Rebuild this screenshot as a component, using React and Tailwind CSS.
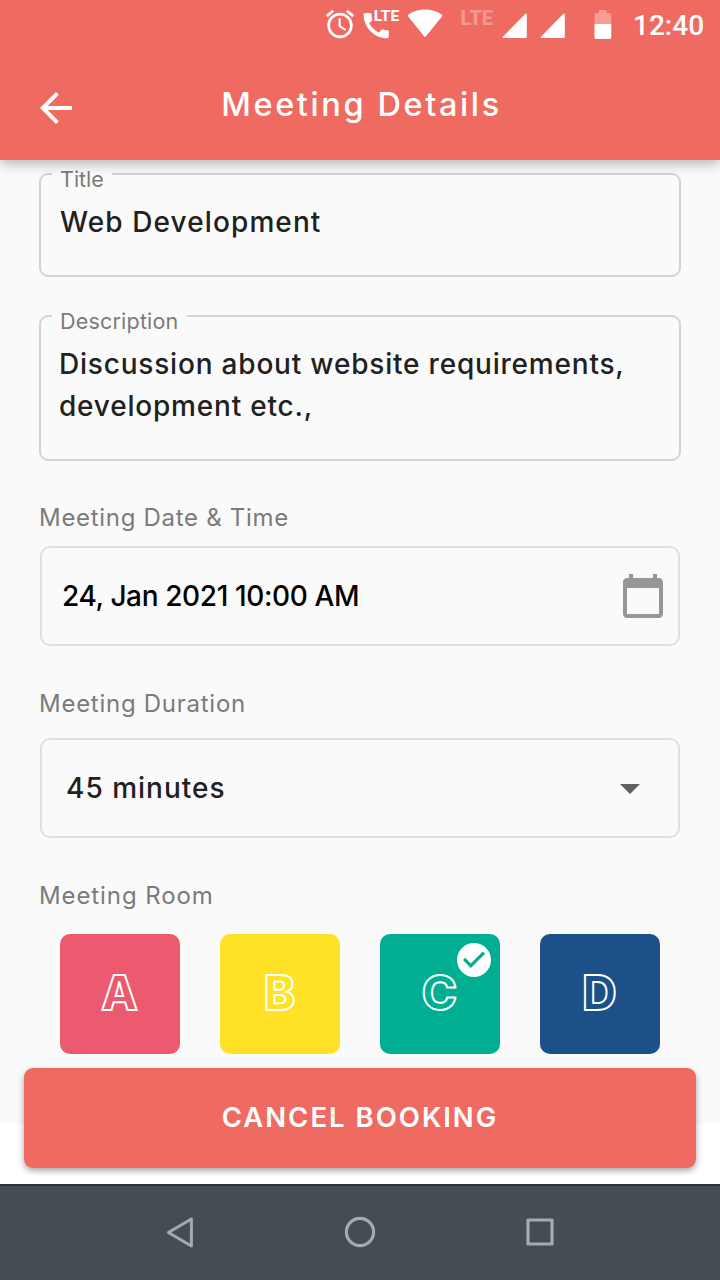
const ROOMS = [
  { name: "A", color: "bg-[#eb5a6e]" },
  { name: "B", color: "bg-[#ffe226]" },
  { name: "C", color: "bg-[#00af92]", selected: true },
  { name: "D", color: "bg-[#1b5088]" },
];

function SignalIcon() {
  return (
    <svg className="h-[25px] w-[25px]" viewBox="0 0 25 25" fill="#fff">
      <path d="M23.4.8Q24.8 0 24.8 1.6V23.8Q24.8 25 23.6 25H1.6Q0 25 .9 23.8Z" />
    </svg>
  );
}

function StatusBar() {
  return (
    <div className="flex h-12 items-start pl-[323px] text-white">
      <svg className="mt-[7px] h-[34px] w-[34px]" viewBox="0 0 24 24" fill="currentColor">
        <path d="M22 5.72l-4.6-3.86-1.29 1.53 4.6 3.86L22 5.72zM7.88 3.39L6.6 1.86 2 5.71l1.29 1.53 4.59-3.85zM12.5 8H11v6l4.75 2.85.75-1.23-4-2.37V8zM12 4c-4.97 0-9 4.03-9 9s4.02 9 9 9c4.97 0 9-4.03 9-9s-4.03-9-9-9zm0 16c-3.87 0-7-3.13-7-7s3.13-7 7-7 7 3.13 7 7-3.13 7-7 7z" />
      </svg>
      <svg className="mt-[4px] ml-[6px] h-[36px] w-[38px]" viewBox="0 0 38 36" fill="currentColor">
        <path
          transform="translate(-3.6 4.8) scale(1.4)"
          d="M20.01 15.38c-1.23 0-2.42-.2-3.53-.56-.35-.12-.74-.03-1.01.24l-1.57 1.97c-2.83-1.35-5.48-3.9-6.89-6.83l1.95-1.66c.27-.28.35-.67.24-1.02-.37-1.11-.56-2.3-.56-3.53 0-.54-.45-.99-.99-.99H4.19C3.65 3 3 3.24 3 3.99 3 13.28 10.73 21 20.01 21c.71 0 .99-.63.99-1.18v-3.45c0-.54-.45-.99-.99-.99z"
        />
        <text x="10.7" y="17" fontFamily="Roboto, sans-serif" fontWeight="800" fontSize="15" textLength="25.6" lengthAdjust="spacingAndGlyphs">LTE</text>
      </svg>
      <svg className="mt-[9px] ml-[6px] h-[29px] w-[37px]" viewBox="0 0 37 29" fill="currentColor">
        <path d="M1.2 7.4Q.1 6.2 1.5 5.4Q8.7 .6 18 .6T34.7 5.4Q36 6.2 35 7.4L19 27.3Q18 28.4 17 27.3Z" />
      </svg>
      <svg className="mt-[2px] ml-[16px] h-[34px] w-[35px] opacity-30" viewBox="0 0 35 34" fill="currentColor">
        <text x="0.5" y="23" fontFamily="Roboto, sans-serif" fontWeight="800" fontSize="19.5" textLength="32.6" lengthAdjust="spacingAndGlyphs">LTE</text>
      </svg>
      <div className="mt-[13px] ml-[7px] flex gap-[13px]">
        <SignalIcon />
        <SignalIcon />
      </div>
      <svg className="mt-[9px] ml-[29px] h-[31px] w-[18px]" viewBox="0 0 18 31" fill="currentColor">
        <path opacity=".35" d="M.5 15V5.5Q.5 4 2 4H5V1H12.5V4H15.8Q17.3 4 17.3 5.5V15Z" />
        <path d="M.5 15H17.3V28.3Q17.3 30 15.8 30H2Q.5 30 .5 28.3Z" />
      </svg>
      <span className="ml-[21px] font-[Roboto] text-[28px] leading-[51px] font-medium">12:40</span>
    </div>
  );
}

function AppBar() {
  return (
    <div className="flex h-28 items-center px-8 pt-2">
      <svg className="h-12 w-12 text-white" viewBox="0 0 24 24" fill="currentColor">
        <path d="M20 11H7.83l5.59-5.59L12 4l-8 8 8 8 1.41-1.41L7.83 13H20v-2z" />
      </svg>
      <h1 className="flex-1 -mt-1.5 pr-[45px] text-center text-[32.5px] leading-10 font-medium tracking-[2.6px] text-white">
        Meeting Details
      </h1>
    </div>
  );
}

function OutlinedField({ label, labelClass, className, children }) {
  return (
    <div className={`mx-[39px] rounded-[9px] border-2 border-[#d3d3d3] px-[11px] text-[28px] font-medium text-[#212121] ${className}`}>
      <div className={`-mt-[10px] flex h-7 w-fit items-center bg-[#fafafa] pr-[8px] pl-[8px] text-[21.5px] font-normal text-[#7b7b7b] ${labelClass}`}>
        {label}
      </div>
      {children}
    </div>
  );
}

function RoomTile({ room }) {
  return (
    <div className={`relative flex h-30 w-30 items-center justify-center rounded-[10px] ${room.color}`}>
      <span className="-mt-[2px] -ml-[1px] text-[47.5px] font-extrabold text-transparent [-webkit-text-stroke:1.9px_#ffffff]">
        {room.name}
      </span>
      {room.selected && (
        <span className="absolute top-[9px] right-[9px] flex h-[34px] w-[34px] items-center justify-center rounded-full bg-white text-[#00af92]">
          <svg className="h-[38px] w-[38px] shrink-0" viewBox="0 0 24 24" fill="currentColor">
            <path d="M10 17l-5-5 1.41-1.41L10 14.17l7.59-7.59L19 8l-9 9z" />
          </svg>
        </span>
      )}
    </div>
  );
}

function NavBar() {
  return (
    <nav className="flex h-24 items-center justify-center gap-[136px] border-t-2 border-[#2d3237] bg-[#454c52] text-[#a5aab0]">
      <svg className="h-11 w-11" viewBox="0 0 44 44" fill="none" stroke="currentColor" strokeWidth="3" strokeLinejoin="round">
        <path d="M33.4 8V35L10.4 21.5Z" />
      </svg>
      <svg className="h-11 w-11" viewBox="0 0 44 44" fill="none" stroke="currentColor" strokeWidth="3.2">
        <circle cx="22" cy="21" r="13.6" />
      </svg>
      <svg className="h-11 w-11" viewBox="0 0 44 44" fill="none" stroke="currentColor" strokeWidth="3.2" strokeLinejoin="round">
        <path d="M10 9H34V33H10Z" />
      </svg>
    </nav>
  );
}

export default function App() {
  return (
    <div className="flex h-[1280px] w-[720px] flex-col overflow-hidden bg-white font-[Inter,sans-serif]">
      <header className="relative z-10 h-40 bg-[#ef6a60] shadow-[0_4px_12px_rgba(0,0,0,0.27)]">
        <StatusBar />
        <AppBar />
      </header>

      <main className="flex h-[964px] shrink-0 flex-col bg-[#fafafa]">
        <OutlinedField label="Title" className="mt-[13px] h-[104px]">
          <p className="mt-[8px] pl-[8px] leading-[42px] tracking-[1.1px]">Web Development</p>
        </OutlinedField>

        <OutlinedField label="Description" labelClass="tracking-[0.2px]" className="mt-[38px] h-[146px]">
          <p className="mt-[8px] pl-[7px] leading-[42px] tracking-[0.8px]">
            Discussion about website requirements,
            <br />
            development etc.,
          </p>
        </OutlinedField>

        <p className="mt-[41px] pl-[39px] text-[24px] leading-8 tracking-[0.7px] text-[#7b7b7b]">Meeting Date &amp; Time</p>
        <div className="mx-10 mt-[12px] flex h-[100px] items-center justify-between rounded-[10px] border-2 border-[#e0e0e0] pr-[11px] pl-[20px]">
          <span className="text-[28px] font-medium tracking-[-0.38px] text-black">24, Jan 2021 10:00 AM</span>
          <svg className="h-12 w-12 text-[#979797]" viewBox="0 0 24 24" fill="currentColor">
            <path d="M20 3h-1V1h-2v2H7V1H5v2H4c-1.1 0-2 .9-2 2v16c0 1.1.9 2 2 2h16c1.1 0 2-.9 2-2V5c0-1.1-.9-2-2-2zm0 18H4V8h16v13z" />
          </svg>
        </div>

        <p className="mt-[42px] pl-[39px] text-[24px] leading-8 tracking-[0.73px] text-[#7b7b7b]">Meeting Duration</p>
        <div className="mx-10 mt-[18px] flex h-[100px] items-center justify-between rounded-[10px] border-2 border-[#e0e0e0] pr-[24px] pl-[24px]">
          <span className="text-[28px] font-medium tracking-[1px] text-[#212121]">45 minutes</span>
          <svg className="h-12 w-12 text-[#616161]" viewBox="0 0 24 24" fill="currentColor">
            <path d="M7 10l5 5 5-5z" />
          </svg>
        </div>

        <p className="mt-[42px] pl-[39px] text-[24px] leading-8 tracking-[0.9px] text-[#7b7b7b]">Meeting Room</p>
        <div className="mt-[22px] flex gap-10 px-[60px]">
          {ROOMS.map((room) => (
            <RoomTile key={room.name} room={room} />
          ))}
        </div>
      </main>

      <button className="relative mx-6 -mt-14 mb-4 h-[100px] shrink-0 rounded-[9px] bg-[#ef6a60] text-[27.5px] font-semibold tracking-[2px] text-white shadow-[0_3px_6px_rgba(0,0,0,0.35)]">
        CANCEL BOOKING
      </button>

      <NavBar />
    </div>
  );
}
